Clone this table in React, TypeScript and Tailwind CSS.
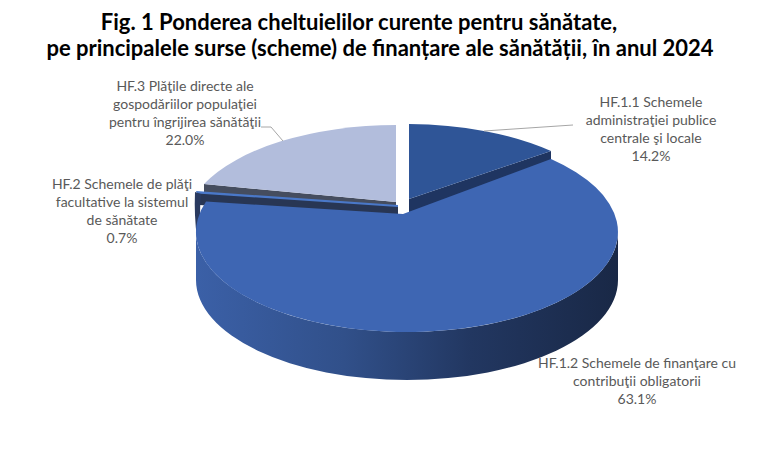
import React from "react";

const labelClass = "fill-[#595959] text-[14px]";

const ChartLabel = ({
  x,
  y,
  lines,
}: {
  x: number;
  y: number;
  lines: string[];
}) => {
  return (
    <text x={x} y={y} textAnchor="middle" className={labelClass}>
      {lines.map((line, i) => (
        <tspan key={i} x={x} dy={i === 0 ? 0 : 18}>
          {line}
        </tspan>
      ))}
    </text>
  );
};

const PieChart = () => {
  return (
    <svg width="760" height="400" viewBox="0 61 760 400" className="block">
      <defs>
        <linearGradient id="mainSide" x1="196" y1="0" x2="618" y2="0" gradientUnits="userSpaceOnUse">
          <stop offset="0" stopColor="#3B60A7" />
          <stop offset="0.35" stopColor="#31508A" />
          <stop offset="0.65" stopColor="#223761" />
          <stop offset="1" stopColor="#192846" />
        </linearGradient>
      </defs>

      {/* HF.3 */}
      <polygon points="204,184 396,202 396,216 204,198" fill="#454D5F" />
      <path d="M 396 202 L 396 125 A 211 100 0 0 0 204 184 Z" fill="#B2BDDC" />

      {/* HF.1.1 */}
      <polygon points="409,199 551,151 551,200 409,248" fill="#1F3561" />
      <path d="M 409 199 L 409 124 A 211 100 0 0 1 551 151 Z" fill="#2F5597" />

      {/* HF.2 */}
      <polygon points="197,192 398,206 398,216 199,205" fill="#283654" />
      <polygon points="196,191 398,205 398,207 197,193.5" fill="#4A78C8" />
      <path d="M 195 192 L 201 194 Q 199 215 201 240 L 197 238 Q 194 215 195 192 Z" fill="#2A3A60" />

      {/* HF.1.2 */}
      <path
        d="M 196 232 A 211 100 0 0 0 618 232 L 618 280 A 211 100 0 0 1 196 280 Z"
        fill="url(#mainSide)"
      />
      <path d="M 403 214 L 551 159 A 211 100 0 1 1 206 201.6 Z" fill="#3E66B3" />

      {/* leader lines */}
      <polyline points="261,127 271,127 283,141" fill="none" stroke="#A6A6A6" strokeWidth="1" />
      <line x1="484" y1="131" x2="573" y2="125" stroke="#A6A6A6" strokeWidth="1" />

      <ChartLabel
        x={185}
        y={91}
        lines={[
          "HF.3 Plăţile directe ale",
          "gospodăriilor populaţiei",
          "pentru îngrijirea sănătăţii",
          "22.0%",
        ]}
      />
      <ChartLabel
        x={122}
        y={189}
        lines={["HF.2 Schemele de plăţi", "facultative la sistemul", "de sănătate", "0.7%"]}
      />
      <ChartLabel
        x={651}
        y={107}
        lines={["HF.1.1 Schemele", "administraţiei publice", "centrale şi locale", "14.2%"]}
      />
      <ChartLabel
        x={637}
        y={368}
        lines={["HF.1.2 Schemele de finanţare cu", "contribuţii obligatorii", "63.1%"]}
      />
    </svg>
  );
};

const App = () => {
  return (
    <div className="w-[760px] h-[461px] bg-white overflow-hidden font-['Lato','Open_Sans',sans-serif]">
      <div className="h-[61px] pt-[9px] text-[22px] font-bold leading-[26px] text-black text-center">
        <p className="pr-[42px]">Fig. 1 Ponderea cheltuielilor curente pentru sănătate,</p>
        <p>pe principalele surse (scheme) de finanțare ale sănătății, în anul 2024</p>
      </div>
      <PieChart />
    </div>
  );
};

export default App;
